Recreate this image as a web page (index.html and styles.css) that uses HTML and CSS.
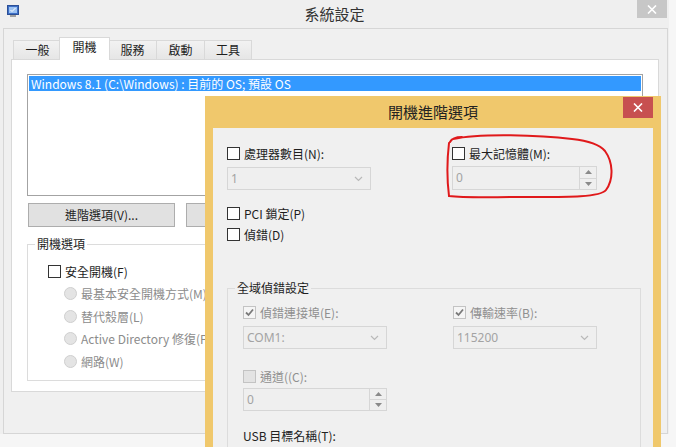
FILE: index.html
```html
<!DOCTYPE html>
<html lang="zh-Hant">
<head>
    <meta charset="UTF-8">
    <title>系統設定</title>
    <link rel="stylesheet" href="styles.css">
</head>
<body>

    <div class="window">
        <div class="titlebar">
            <svg class="app-icon" width="12" height="13" viewBox="0 0 12 13">
                <rect x="0.5" y="0.5" width="11" height="9" fill="#3d6fc6" stroke="#2b4f96"/>
                <rect x="2" y="2" width="8" height="6" fill="#9cc2f2"/>
                <path d="M3.5 5 L5 6.5 L8.5 3" stroke="#fff" fill="none"/>
                <rect x="3" y="10" width="6" height="2" fill="#a0a0a0"/>
            </svg>
            <div class="title">系統設定</div>
            <div class="close-btn">
                <svg width="10" height="9" viewBox="0 0 10 9"><path d="M1 0.5 L9 8.5 M9 0.5 L1 8.5" stroke="#fff" stroke-width="1.6"/></svg>
            </div>
        </div>

        <div class="client">
            <div class="tabs">
                <div class="tab t1">一般</div>
                <div class="tab active">開機</div>
                <div class="tab t3">服務</div>
                <div class="tab t4">啟動</div>
                <div class="tab t5">工具</div>
            </div>
            <div class="panel">
                <div class="listbox">
                    <div class="list-item">Windows 8.1 (C:\Windows) : 目前的 OS; 預設 OS</div>
                </div>
                <div class="btn-row">
                    <div class="btn">進階選項(V)...</div>
                    <div class="btn">設為預設值(D)</div>
                </div>
                <div class="group boot-group">
                    <div class="group-label">開機選項</div>
                    <div class="opt safe"><span class="box"></span>安全開機(F)</div>
                    <div class="opt radio"><span class="dot"></span>最基本安全開機方式(M)</div>
                    <div class="opt radio"><span class="dot"></span>替代殼層(L)</div>
                    <div class="opt radio"><span class="dot"></span>Active Directory 修復(P)</div>
                    <div class="opt radio"><span class="dot"></span>網路(W)</div>
                </div>
            </div>
        </div>
    </div>

    <!-- 開機進階選項 dialog -->
    <div class="dialog">
        <div class="dlg-title">
            <div class="dlg-text">開機進階選項</div>
            <div class="dlg-close">
                <svg width="10" height="9" viewBox="0 0 10 9"><path d="M1 0.5 L9 8.5 M9 0.5 L1 8.5" stroke="#fff" stroke-width="1.6"/></svg>
            </div>
        </div>
        <div class="dlg-body">
            <div class="cols">
                <div class="col">
                    <div class="check"><span class="box"></span>處理器數目(N):</div>
                    <div class="field combo cpu"><span>1</span>
                        <svg class="chev" width="9" height="6" viewBox="0 0 9 6"><path d="M1 1 L4.5 4.5 L8 1" stroke="#b9b9b9" fill="none" stroke-width="1.2"/></svg>
                    </div>
                    <div class="check pci"><span class="box"></span>PCI 鎖定(P)</div>
                    <div class="check dbg"><span class="box"></span>偵錯(D)</div>
                </div>
                <div class="col">
                    <div class="check"><span class="box"></span>最大記憶體(M):</div>
                    <div class="field spin mem"><span>0</span>
                        <div class="spin-btns">
                            <div class="arrow"><svg width="7" height="4" viewBox="0 0 7 4"><path d="M0 4 L3.5 0 L7 4 Z" fill="#8a8a8a"/></svg></div>
                            <div class="arrow"><svg width="7" height="4" viewBox="0 0 7 4"><path d="M0 0 L3.5 4 L7 0 Z" fill="#8a8a8a"/></svg></div>
                        </div>
                    </div>
                </div>
            </div>

            <div class="group dbg-group">
                <div class="group-label">全域偵錯設定</div>
                <div class="group-cols">
                    <div class="col">
                        <div class="check off"><span class="box on"><svg width="11" height="11" viewBox="0 0 11 11"><path d="M2 5.5 L4.5 8 L9 2.5" stroke="#7a7a7a" stroke-width="1.8" fill="none"/></svg></span>偵錯連接埠(E):</div>
                        <div class="field combo"><span>COM1:</span>
                            <svg class="chev" width="9" height="6" viewBox="0 0 9 6"><path d="M1 1 L4.5 4.5 L8 1" stroke="#b9b9b9" fill="none" stroke-width="1.2"/></svg>
                        </div>
                        <div class="check off channel"><span class="box"></span>通道((C):</div>
                        <div class="field spin chan"><span>0</span>
                            <div class="spin-btns">
                                <div class="arrow"><svg width="7" height="4" viewBox="0 0 7 4"><path d="M0 4 L3.5 0 L7 4 Z" fill="#8a8a8a"/></svg></div>
                                <div class="arrow"><svg width="7" height="4" viewBox="0 0 7 4"><path d="M0 0 L3.5 4 L7 0 Z" fill="#8a8a8a"/></svg></div>
                            </div>
                        </div>
                        <div class="usb-label">USB 目標名稱(T):</div>
                    </div>
                    <div class="col">
                        <div class="check off"><span class="box on"><svg width="11" height="11" viewBox="0 0 11 11"><path d="M2 5.5 L4.5 8 L9 2.5" stroke="#7a7a7a" stroke-width="1.8" fill="none"/></svg></span>傳輸速率(B):</div>
                        <div class="field combo"><span>115200</span>
                            <svg class="chev" width="9" height="6" viewBox="0 0 9 6"><path d="M1 1 L4.5 4.5 L8 1" stroke="#b9b9b9" fill="none" stroke-width="1.2"/></svg>
                        </div>
                    </div>
                </div>
            </div>
        </div>
    </div>

    <!-- red marker drawn over the screenshot -->
    <svg class="annotation" width="676" height="447" viewBox="0 0 676 447">
        <path d="M462 137 C 458 137, 452 138, 450 142 M453 139 C 480 133, 540 135, 572 139 C 590 141, 600 145, 605 151 C 613 162, 614 179, 606 190 C 600 198, 560 197, 520 197 C 490 197, 466 198, 449 196 C 447 180, 447 160, 449 143" stroke="#e0191b" stroke-width="2" fill="none" stroke-linecap="round"/>
    </svg>

</body>
</html>
```

FILE: styles.css
```css
body {
    margin: 0;
    width: 676px;
    height: 447px;
    overflow: hidden;
    position: relative;
    background: #f6f6f6;
    font-family: "Noto Sans CJK TC", "Noto Sans", sans-serif;
    font-size: 12px;
    color: #1e1e1e;
}
.window {
    width: 669px;
    background: #efefef;
}
.titlebar {
    height: 28px;
    display: grid;
    grid-template-columns: 30px 1fr 30px;
    padding: 0 2px;
}
.app-icon {
    margin: 5px 0 0 5px;
}
.title {
    text-align: center;
    font-size: 15px;
    line-height: 28px;
    color: #333;
}
.close-btn {
    height: 18px;
    background: #c7c7c7;
    display: flex;
    align-items: center;
    justify-content: center;
}
.client {
    margin-left: 3px;
    width: 656px;
    height: 396px;
    border: 1px solid #d6d6d6;
    background: #f0f0f0;
    padding: 8px 0 0 7px;
}

/* tabs */
.tabs {
    display: flex;
    align-items: flex-end;
    height: 22px;
    padding-left: 2px;
}
.tab {
    height: 18px;
    line-height: 18px;
    text-align: center;
    border: 1px solid #d9d9d9;
    border-bottom: none;
    background: linear-gradient(#f2f2f2, #e6e6e6);
    margin-right: -1px;
}
.t1 { width: 47px; }
.t3 { width: 47px; }
.t4 { width: 47px; }
.t5 { width: 46px; }
.tab.active {
    position: relative;
    z-index: 1;
    width: 49px;
    height: 22px;
    line-height: 18px;
    margin: 0 -2px -1px -2px;
    background: #fff;
}
.panel {
    width: 631px;
    height: 317px;
    border: 1px solid #d9d9d9;
    background: #fff;
    padding: 14px 0 0 15px;
}
.listbox {
    width: 614px;
    height: 120px;
    border: 1px solid #a3a3a3;
}
.list-item {
    margin: 1px;
    height: 15px;
    line-height: 15px;
    padding-left: 2px;
    background: #3399ff;
    color: #fff;
    white-space: nowrap;
}
.btn-row {
    display: flex;
    gap: 11px;
    margin: 7px 0 0 1px;
}
.btn {
    width: 145px;
    height: 22px;
    line-height: 22px;
    text-align: center;
    background: #e1e1e1;
    border: 1px solid #adadad;
    white-space: nowrap;
}
.group {
    border: 1px solid #dcdcdc;
}
.group-label {
    width: fit-content;
    height: 16px;
    line-height: 16px;
    margin: -9px 0 0 7px;
    padding: 0 2px;
}
.boot-group {
    margin-top: 17px;
    width: 614px;
    height: 135px;
}
.boot-group .group-label {
    background: #fff;
}
.opt {
    display: flex;
    align-items: center;
    height: 22.5px;
    padding-left: 20px;
    white-space: nowrap;
}
.safe {
    margin-top: 8px;
}
.box {
    width: 11px;
    height: 11px;
    border: 1px solid #333;
    background: #fff;
    margin-right: 4px;
    flex: none;
    display: flex;
}
.radio {
    padding-left: 36px;
    color: #8c8c8c;
}
.dot {
    width: 11px;
    height: 11px;
    border: 1px solid #cfcfcf;
    border-radius: 50%;
    background: #e4e4e4;
    margin-right: 4px;
    flex: none;
}

/* dialog */
.dialog {
    position: absolute;
    left: 205px;
    top: 96px;
    width: 440px;
    height: 351px;
    padding: 0 8px;
    background: #f0c86c;
    overflow: hidden;
}
.dlg-title {
    height: 32px;
    display: grid;
    grid-template-columns: 30px 1fr 30px;
}
.dlg-text {
    grid-column: 2;
    text-align: center;
    font-size: 15px;
    line-height: 32px;
    color: #222;
}
.dlg-close {
    margin-top: 1px;
    height: 21px;
    background: #c75050;
    display: flex;
    align-items: center;
    justify-content: center;
}
.dlg-body {
    height: 302px;
    background: #f0f0f0;
    padding: 17px 0 0 14px;
}
.cols {
    display: grid;
    grid-template-columns: 225px 1fr;
}
.check {
    display: flex;
    align-items: center;
    height: 16px;
    white-space: nowrap;
}
.field {
    display: flex;
    align-items: center;
    justify-content: space-between;
    border: 1px solid #d6d6d6;
    background: #efefef;
    color: #a3a3a3;
    padding-left: 3px;
    box-sizing: border-box;
}
.field span {
    font-family: "Noto Sans", sans-serif;
}
.combo {
    height: 23px;
    width: 144px;
    padding-right: 7px;
}
.cpu {
    margin-top: 6px;
}
.pci {
    margin-top: 15px;
}
.dbg {
    margin-top: 5px;
}
.spin {
    width: 145px;
    height: 24px;
    align-items: stretch;
}
.spin span {
    line-height: 22px;
}
.mem {
    margin-top: 5px;
}
.spin-btns {
    width: 16px;
    border-left: 1px solid #d6d6d6;
    display: flex;
    flex-direction: column;
}
.arrow {
    flex: 1;
    display: flex;
    align-items: center;
    justify-content: center;
}
.arrow + .arrow {
    border-top: 1px solid #d6d6d6;
}
.dbg-group {
    margin-top: 46px;
    width: 412px;
    height: 200px;
}
.dbg-group .group-label {
    background: #f0f0f0;
}
.group-cols {
    display: grid;
    grid-template-columns: 210px 1fr;
    padding: 8px 0 0 15px;
}
.check.off {
    color: #8f8f8f;
}
.check.off .box {
    border-color: #c3c3c3;
    background: #e3e3e3;
}
.check.off .box.on {
    background: #f5f5f5;
}
.group-cols .combo {
    margin-top: 6px;
}
.channel {
    margin-top: 19px;
}
.chan {
    margin-top: 4px;
    height: 23px;
    width: 144px;
}
.usb-label {
    margin-top: 17px;
    height: 16px;
    line-height: 16px;
    color: #222;
    white-space: nowrap;
}

.annotation {
    position: absolute;
    left: 0;
    top: 0;
    pointer-events: none;
}
```
